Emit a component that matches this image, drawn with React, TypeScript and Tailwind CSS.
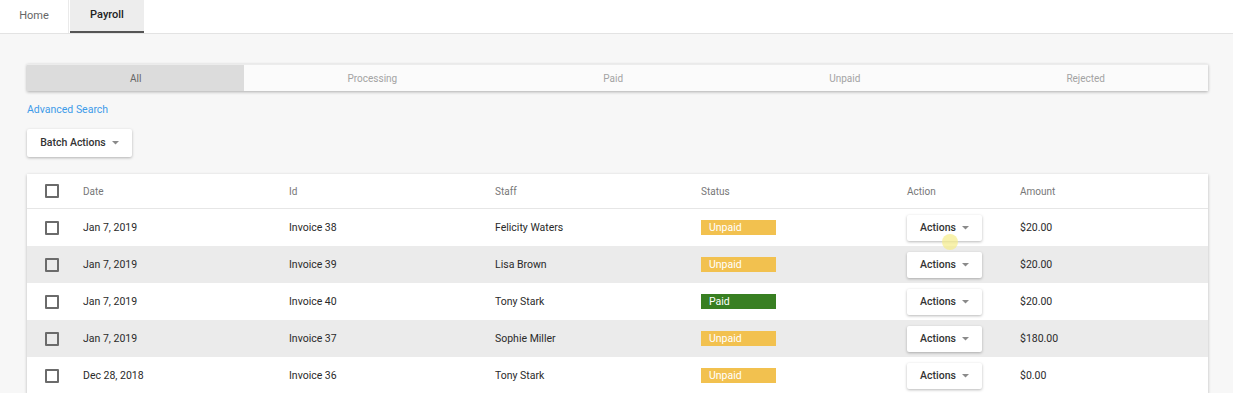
import React from 'react';

type Row = {
  date: string;
  id: string;
  staff: string;
  status: 'Unpaid' | 'Paid';
  amount: string;
};

const rows: Row[] = [
  { date: 'Jan 7, 2019', id: 'Invoice 38', staff: 'Felicity Waters', status: 'Unpaid', amount: '$20.00' },
  { date: 'Jan 7, 2019', id: 'Invoice 39', staff: 'Lisa Brown', status: 'Unpaid', amount: '$20.00' },
  { date: 'Jan 7, 2019', id: 'Invoice 40', staff: 'Tony Stark', status: 'Paid', amount: '$20.00' },
  { date: 'Jan 7, 2019', id: 'Invoice 37', staff: 'Sophie Miller', status: 'Unpaid', amount: '$180.00' },
  { date: 'Dec 28, 2018', id: 'Invoice 36', staff: 'Tony Stark', status: 'Unpaid', amount: '$0.00' },
];

const filters = ['All', 'Processing', 'Paid', 'Unpaid', 'Rejected'];

const Caret = () => (
  <svg width="7" height="4" viewBox="0 0 7 4" className="ml-[6px]">
    <path d="M0 0 L7 0 L3.5 3.5 Z" fill="#8a8a8a" />
  </svg>
);

const Checkbox = () => (
  <div className="w-[14px] h-[14px] border-2 border-[#6b6b6b] rounded-[1px]" />
);

const App: React.FC = () => {
  return (
    <div className="w-[1233px] h-[393px] overflow-hidden bg-[#f7f7f7] font-['Roboto',sans-serif] relative">
      {/* Top tabs */}
      <div className="h-[34px] bg-white border-b border-[#e3e3e3] flex">
        <div className="w-[69px] flex items-center justify-center text-[11px] text-[#666] border-r border-[#eaeaea]">
          Home
        </div>
        <div className="w-[74px] ml-[1px] flex items-center justify-center text-[11px] text-[#222] font-medium bg-[#ededed] border-b-2 border-[#555]">
          Payroll
        </div>
      </div>

      <div className="px-[27px] pr-[25px] pt-[30px]">
        {/* Filter bar */}
        <div className="flex h-[27px] bg-[#fbfbfb] border-t border-[#ececec] shadow-[0_1px_3px_rgba(0,0,0,0.3)]">
          {filters.map((f, i) => (
            <div
              key={f}
              className={
                i === 0
                  ? 'flex-auto flex items-center justify-center text-[10px] text-[#666] bg-[#dcdcdc]'
                  : 'flex-auto flex items-center justify-center text-[10px] text-[#a3a3a3]'
              }
            >
              {f}
            </div>
          ))}
        </div>

        <div className="mt-[12px] text-[10.5px] text-[#3d9be9] leading-[14px]">Advanced Search</div>

        <button className="mt-[12px] h-[28px] w-[105px] flex items-center justify-center bg-white rounded-[2px] shadow-[0_1px_3px_rgba(0,0,0,0.28)] text-[10.5px] font-medium text-[#333]">
          Batch Actions
          <Caret />
        </button>

        {/* Table */}
        <div className="mt-[17px] bg-white shadow-[0_1px_3px_rgba(0,0,0,0.25)]">
          <div className="h-[35px] flex items-center border-b border-[#e6e6e6] text-[10px] text-[#777]">
            <div className="w-[56px] pl-[18px]">
              <Checkbox />
            </div>
            <div className="w-[206px]">Date</div>
            <div className="w-[206px]">Id</div>
            <div className="w-[206px]">Staff</div>
            <div className="w-[206px]">Status</div>
            <div className="w-[113px]">Action</div>
            <div>Amount</div>
          </div>
          {rows.map((r, i) => (
            <div
              key={r.id}
              className={
                (i % 2 === 1 ? 'bg-[#ebebeb] ' : 'bg-white ') +
                'h-[37px] flex items-center text-[10.5px] text-[#2a2a2a]'
              }
            >
              <div className="w-[56px] pl-[18px]">
                <Checkbox />
              </div>
              <div className="w-[206px]">{r.date}</div>
              <div className="w-[206px]">{r.id}</div>
              <div className="w-[206px]">{r.staff}</div>
              <div className="w-[206px]">
                <div
                  className={
                    (r.status === 'Paid' ? 'bg-[#387f22] ' : 'bg-[#f2c14f] ') +
                    'w-[75px] h-[15px] flex items-center pl-[8px] text-[10.5px] text-white'
                  }
                >
                  {r.status}
                </div>
              </div>
              <div className="w-[113px]">
                <button className="h-[26px] w-[75px] flex items-center justify-center bg-white rounded-[2px] shadow-[0_1px_3px_rgba(0,0,0,0.28)] text-[10.5px] font-medium text-[#333]">
                  Actions
                  <Caret />
                </button>
              </div>
              <div>{r.amount}</div>
            </div>
          ))}
        </div>
      </div>

      {/* cursor highlight */}
      <div className="absolute left-[942px] top-[234px] w-[16px] h-[16px] rounded-full bg-[#f5ec8a] opacity-70" />
    </div>
  );
};

export default App;
